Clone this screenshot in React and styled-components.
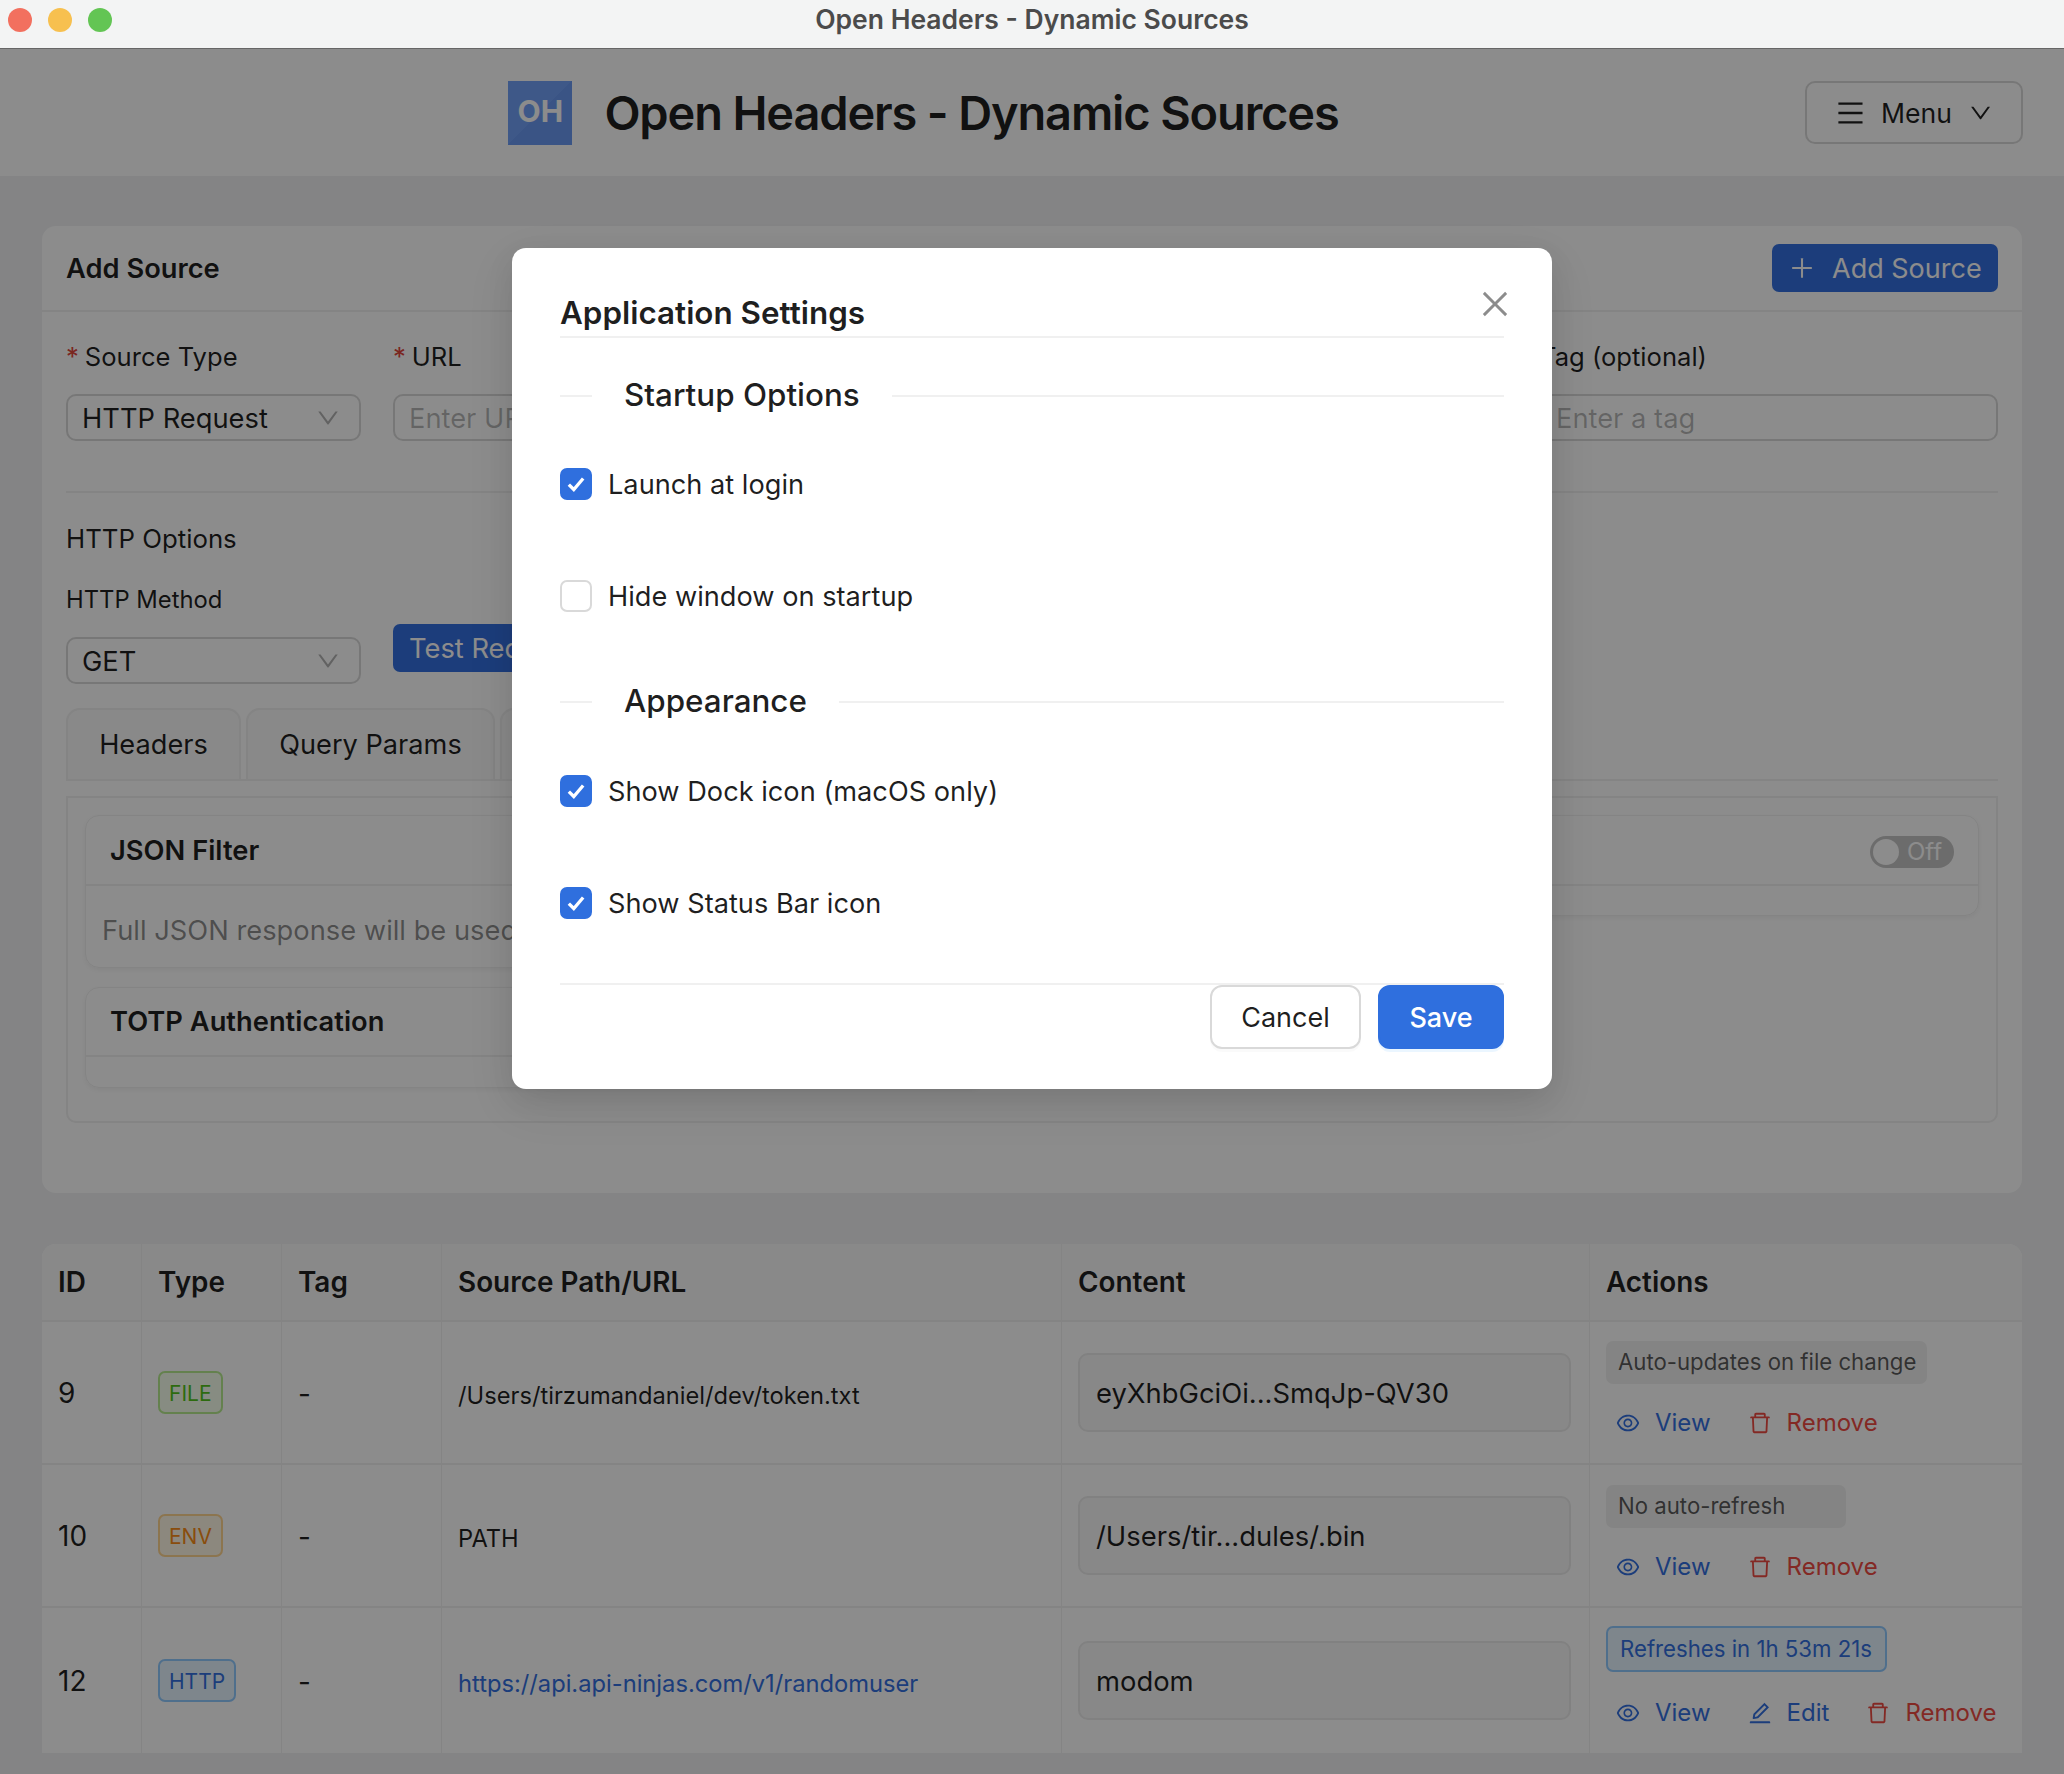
import React from 'react';
import styled, { createGlobalStyle } from 'styled-components';
import {
  AiOutlineClose,
  AiOutlineDelete,
  AiOutlineDown,
  AiOutlineEdit,
  AiOutlineEye,
  AiOutlineMenu,
  AiOutlinePlus,
} from 'react-icons/ai';

const GlobalStyle = createGlobalStyle`
  html, body {
    margin: 0;
    padding: 0;
    background: #f0f1f3;
  }

  * {
    box-sizing: border-box;
  }

  body {
    font-family: Inter, "Liberation Sans", sans-serif;
    color: rgba(0, 0, 0, 0.88);
  }
`;

const Screen = styled.div`
  position: relative;
  width: 2064px;
  height: 1774px;
  overflow: hidden;
`;

const TitleBar = styled.div`
  position: relative;
  display: flex;
  align-items: center;
  justify-content: center;
  height: 49px;
  padding-bottom: 11px;
  background: #f3f4f4;
  border-bottom: 1px solid #666;
  font-size: 26.5px;
  font-weight: 600;
  color: #4b4b4b;
`;

const Lights = styled.div`
  position: absolute;
  left: 8px;
  top: 8px;
  display: flex;
  gap: 16px;
`;

const Light = styled.span`
  width: 24px;
  height: 24px;
  border-radius: 50%;
  background: ${({ $color }) => $color};
`;

const AppHeader = styled.header`
  display: flex;
  align-items: center;
  height: 127px;
  padding: 0 41px 0 42px;
  background: #fff;
`;

const Brand = styled.div`
  flex: 1;
  display: flex;
  align-items: center;
  justify-content: center;
  gap: 32px;
`;

const Logo = styled.div`
  display: flex;
  align-items: center;
  justify-content: center;
  width: 64px;
  height: 64px;
  background: linear-gradient(135deg, #72a1f8 50%, #6a9af2 50%);
  color: #fff;
  font-size: 30px;
  font-weight: 700;
  padding-bottom: 4px;
`;

const AppTitle = styled.h1`
  margin: 0;
  font-size: 47px;
  line-height: 64px;
  font-weight: 600;
  letter-spacing: -1.16px;
`;

const MenuButton = styled.div`
  display: flex;
  align-items: center;
  width: 218px;
  height: 63px;
  padding: 0 28px;
  border: 2px solid #d9d9d9;
  border-radius: 10px;
  font-size: 26.6px;
  svg:first-child {
    font-size: 32px;
    margin-right: 15px;
  }
  svg:last-child {
    font-size: 26px;
    margin-left: 16px;
  }
`;

const Main = styled.main`
  padding: 50px 42px 0;
`;

const Card = styled.section`
  height: 967px;
  background: #fff;
  border-radius: 14px;
`;

const CardHeader = styled.div`
  display: flex;
  align-items: center;
  justify-content: space-between;
  height: 86px;
  padding: 0 24px;
  border-bottom: 2px solid #f0f0f0;
`;

const CardTitle = styled.div`
  font-size: 27.3px;
  font-weight: 600;
`;

const PrimaryButton = styled.div`
  display: inline-flex;
  align-items: center;
  gap: 16px;
  height: 48px;
  padding: 0 16px;
  border-radius: 7px;
  background: #3370e0;
  color: #fff;
  font-size: 27px;
  white-space: nowrap;
`;

const AddButton = styled(PrimaryButton)`
  width: 226px;
  svg {
    font-size: 28px;
    flex-shrink: 0;
  }
`;

const CardBody = styled.div`
  padding: 25px 24px 0;
`;

const FormGrid = styled.div`
  display: grid;
  grid-template-columns: 295px 1fr 458px;
  column-gap: 32px;
`;

const Label = styled.div`
  height: 40px;
  margin-bottom: 17px;
  font-size: 25.6px;
  line-height: 40px;
  white-space: nowrap;
`;

const Star = styled.span`
  color: #e0453a;
  margin-right: 6px;
`;

const Field = styled.div`
  display: flex;
  align-items: center;
  justify-content: space-between;
  height: 47px;
  padding: 1px 14px 0;
  border: 2px solid #d9d9d9;
  border-radius: 10px;
  font-size: 27.3px;
  color: ${({ $placeholder }) => ($placeholder ? 'rgba(0, 0, 0, 0.28)' : 'inherit')};
  svg {
    font-size: 26px;
    color: rgba(0, 0, 0, 0.3);
    margin-right: 4px;
  }
`;

const Rule = styled.hr`
  margin: 50px 0 26px;
  border: 0;
  border-top: 2px solid #f0f0f0;
`;

const SectionName = styled.div`
  font-size: 25.8px;
  line-height: 40px;
  height: 40px;
  margin-bottom: 21px;
`;

const MethodRow = styled.div`
  display: grid;
  grid-template-columns: 295px auto;
  column-gap: 32px;
  justify-content: start;
`;

const MethodLabel = styled(Label)`
  font-size: 23.8px;
`;

const TestButton = styled(PrimaryButton)`
  align-self: end;
  margin-bottom: 12px;
  font-size: 27.3px;
`;

const TabBar = styled.div`
  display: flex;
  gap: 5px;
  margin-top: 24px;
  height: 73px;
  border-bottom: 2px solid #f0f0f0;
`;

const Tab = styled.div`
  display: flex;
  align-items: center;
  justify-content: center;
  width: ${({ $width }) => $width}px;
  height: 71px;
  background: #fafafa;
  border: 2px solid #f0f0f0;
  border-bottom: 0;
  border-radius: 14px 14px 0 0;
  font-size: 27.2px;
`;

const TabPanel = styled.div`
  display: grid;
  grid-template-columns: 900px 1fr;
  align-items: start;
  height: 327px;
  margin-top: 15px;
  padding: 17px;
  border: 2px solid #f0f0f0;
  border-radius: 0 0 10px 10px;
`;

const PanelColumn = styled.div`
  display: flex;
  flex-direction: column;
  gap: 19px;
`;

const InnerCard = styled.div`
  height: ${({ $height }) => $height}px;
  border: 1px solid #f0f0f0;
  border-radius: 14px;
  box-shadow: 0 2px 4px rgba(0, 0, 0, 0.05);
`;

const InnerHeader = styled.div`
  display: flex;
  align-items: center;
  justify-content: ${({ $end }) => ($end ? 'flex-end' : 'space-between')};
  height: ${({ $height }) => $height}px;
  padding: 0 24px;
  border-bottom: 2px solid #f0f0f0;
  font-size: 27.3px;
  font-weight: 600;
`;

const InnerText = styled.div`
  padding: 0 16px;
  line-height: 90px;
  font-size: 27.3px;
  color: rgba(0, 0, 0, 0.45);
  white-space: nowrap;
`;

const SwitchOff = styled.div`
  display: flex;
  align-items: center;
  width: 84px;
  height: 32px;
  margin-top: 3px;
  padding: 0 3px;
  border-radius: 16px;
  background: rgba(0, 0, 0, 0.25);
  color: #fff;
  font-size: 24px;
  font-weight: 400;
  opacity: 0.9;
  &::before {
    content: '';
    width: 26px;
    height: 26px;
    margin-right: 8px;
    border-radius: 50%;
    background: #fff;
  }
`;

const SourceTable = styled.div`
  height: 509px;
  margin-top: 51px;
  overflow: hidden;
  background: #fff;
  border-radius: 14px 14px 0 0;
`;

const TableRow = styled.div`
  display: grid;
  grid-template-columns: 100px 140px 160px 620px 528px 432px;
  height: ${({ $height }) => $height}px;
  border-bottom: ${({ $last }) => ($last ? '0' : '2px solid #f0f0f0')};
`;

const Cell = styled.div`
  display: flex;
  flex-direction: column;
  align-items: flex-start;
  justify-content: center;
  padding: ${({ $shift }) => $shift || 0}px 16px 0;
  border-right: ${({ $end }) => ($end ? '0' : '1px solid #f0f0f0')};
  font-size: ${({ $size }) => $size || 28}px;
  min-width: 0;
`;

const HeadCell = styled(Cell)`
  font-size: 27.9px;
  font-weight: 600;
  background: #fafafa;
`;

const TypeTag = styled.span`
  padding: 0 9px;
  height: 43px;
  border: 2px solid ${({ $border }) => $border};
  border-radius: 7px;
  background: ${({ $bg }) => $bg};
  color: ${({ $color }) => $color};
  font-size: 21px;
  line-height: 41px;
`;

const SourceLink = styled.span`
  color: #3370e0;
`;

const ContentBox = styled.div`
  display: flex;
  align-items: center;
  width: 493px;
  height: 79px;
  padding: 0 16px;
  border: 2px solid #ebebeb;
  border-radius: 10px;
  background: #f7f7f7;
  font-size: 27.4px;
  white-space: nowrap;
`;

const ActionCell = styled(Cell)`
  justify-content: flex-start;
  padding-top: ${({ $top }) => $top}px;
`;

const StatusTag = styled.span`
  display: block;
  width: ${({ $width }) => $width}px;
  height: ${({ $active }) => ($active ? 46 : 43)}px;
  padding: 0 ${({ $active }) => ($active ? 12 : 10)}px;
  border: 2px solid ${({ $active }) => ($active ? '#91caff' : 'transparent')};
  border-radius: 7px;
  background: ${({ $active }) => ($active ? '#e6f4ff' : 'rgba(0, 0, 0, 0.06)')};
  color: ${({ $active }) => ($active ? '#3370e0' : 'rgba(0, 0, 0, 0.65)')};
  font-size: 22.2px;
  line-height: ${({ $active }) => ($active ? 42 : 38)}px;
  white-space: nowrap;
`;

const Actions = styled.div`
  display: flex;
  align-items: center;
  gap: 36px;
  margin-top: ${({ $top }) => $top}px;
  padding-left: 9px;
`;

const ActionLink = styled.span`
  display: inline-flex;
  align-items: center;
  gap: 14px;
  font-size: 24px;
  color: ${({ $danger }) => ($danger ? '#ef4b43' : '#3370e0')};
  svg {
    font-size: 26px;
  }
`;

const Overlay = styled.div`
  position: absolute;
  top: 49px;
  left: 0;
  right: 0;
  bottom: 0;
  display: flex;
  justify-content: center;
  padding-top: 199px;
  background: rgba(0, 0, 0, 0.45);
`;

const Modal = styled.div`
  position: relative;
  width: 1040px;
  height: 841px;
  padding: 48px 48px 40px;
  background: #fff;
  border-radius: 14px;
  box-shadow: 0 10px 28px rgba(0, 0, 0, 0.08), 0 16px 50px rgba(0, 0, 0, 0.08);
`;

const CloseIcon = styled(AiOutlineClose)`
  position: absolute;
  top: 38px;
  right: 39px;
  font-size: 36px;
  color: rgba(0, 0, 0, 0.45);
`;

const ModalTitle = styled.div`
  height: 42px;
  border-bottom: 2px solid #f0f0f0;
  font-size: 31.4px;
  font-weight: 600;
  line-height: 34px;
`;

const GroupDivider = styled.div`
  display: flex;
  align-items: center;
  gap: 32px;
  height: 40px;
  margin-top: ${({ $top }) => $top}px;
  margin-bottom: ${({ $bottom }) => $bottom}px;
  white-space: nowrap;
  &::before,
  &::after {
    content: '';
    height: 2px;
    background: #f0f0f0;
  }
  &::before {
    width: 32px;
  }
  &::after {
    flex: 1;
  }
`;

const GroupLabel = styled.span`
  padding-bottom: 2px;
  font-size: 31.4px;
  font-weight: 500;
`;

const CheckRow = styled.label`
  display: flex;
  align-items: center;
  gap: 16px;
  height: 42px;
  margin-bottom: ${({ $gap }) => $gap || 0}px;
  font-size: 27.2px;
`;

const CheckBox = styled.span`
  display: flex;
  align-items: center;
  justify-content: center;
  width: 32px;
  height: 32px;
  border-radius: 7px;
  border: 2px solid ${({ $checked }) => ($checked ? '#2f6fde' : '#d9d9d9')};
  background: ${({ $checked }) => ($checked ? '#2f6fde' : '#fff')};
`;

const ModalFooter = styled.div`
  display: flex;
  justify-content: flex-end;
  gap: 17px;
  margin-top: 59px;
  border-top: 2px solid #f0f0f0;
`;

const FooterButton = styled.div`
  display: flex;
  align-items: center;
  justify-content: center;
  width: ${({ $width }) => $width}px;
  height: 64px;
  border: 2px solid ${({ $primary }) => ($primary ? '#2f6fde' : '#d9d9d9')};
  border-radius: 12px;
  background: ${({ $primary }) => ($primary ? '#2f6fde' : '#fff')};
  color: ${({ $primary }) => ($primary ? '#fff' : 'inherit')};
  font-size: 27px;
  font-weight: ${({ $primary }) => ($primary ? 500 : 400)};
  box-shadow: 0 3px 0 ${({ $primary }) => ($primary ? 'rgba(5, 145, 255, 0.08)' : 'rgba(0, 0, 0, 0.02)')};
`;

const Check = ({ checked }) => (
  <CheckBox $checked={checked}>
    {checked && (
      <svg width="22" height="22" viewBox="0 0 20 20" fill="none">
        <path d="M3.5 10.5 8 15l8.5-10" stroke="#fff" strokeWidth="3" />
      </svg>
    )}
  </CheckBox>
);

const sources = [
  {
    id: 9,
    type: { label: 'FILE', color: '#52c41a', border: '#b7eb8f', bg: '#f6ffed' },
    path: '/Users/tirzumandaniel/dev/token.txt',
    content: 'eyXhbGciOi...SmqJp-QV30',
    status: 'Auto-updates on file change',
    statusWidth: 321,
    top: 19,
    actionsTop: 24,
    height: 143,
  },
  {
    id: 10,
    type: { label: 'ENV', color: '#fa8c16', border: '#ffd591', bg: '#fff7e6' },
    path: 'PATH',
    content: '/Users/tir...dules/.bin',
    status: 'No auto-refresh',
    statusWidth: 240,
    top: 20,
    actionsTop: 24,
    height: 143,
  },
  {
    id: 12,
    type: { label: 'HTTP', color: '#3370e0', border: '#91caff', bg: '#e6f4ff' },
    path: 'https://api.api-ninjas.com/v1/randomuser',
    link: true,
    content: 'modom',
    status: 'Refreshes in 1h 53m 21s',
    statusWidth: 281,
    active: true,
    editable: true,
    top: 18,
    actionsTop: 26,
    height: 145,
    last: true,
  },
];

const App = () => (
  <Screen>
    <GlobalStyle />
    <TitleBar>
      <Lights>
        <Light $color="#f2705f" />
        <Light $color="#f7c04f" />
        <Light $color="#63c554" />
      </Lights>
      Open Headers - Dynamic Sources
    </TitleBar>

    <AppHeader>
      <Brand>
        <Logo>OH</Logo>
        <AppTitle>Open Headers - Dynamic Sources</AppTitle>
      </Brand>
      <MenuButton>
        <AiOutlineMenu />
        Menu
        <AiOutlineDown />
      </MenuButton>
    </AppHeader>

    <Main>
      <Card>
        <CardHeader>
          <CardTitle>Add Source</CardTitle>
          <AddButton>
            <AiOutlinePlus />
            Add Source
          </AddButton>
        </CardHeader>
        <CardBody>
          <FormGrid>
            <div>
              <Label><Star>*</Star>Source Type</Label>
              <Field>HTTP Request <AiOutlineDown /></Field>
            </div>
            <div>
              <Label><Star>*</Star>URL</Label>
              <Field $placeholder>Enter URL</Field>
            </div>
            <div>
              <Label>Tag (optional)</Label>
              <Field $placeholder>Enter a tag</Field>
            </div>
          </FormGrid>
          <Rule />
          <SectionName>HTTP Options</SectionName>
          <MethodRow>
            <div>
              <MethodLabel>HTTP Method</MethodLabel>
              <Field>GET <AiOutlineDown /></Field>
            </div>
            <TestButton>Test Request</TestButton>
          </MethodRow>
          <TabBar>
            <Tab $width={175}>Headers</Tab>
            <Tab $width={249}>Query Params</Tab>
            <Tab $width={120}>Body</Tab>
          </TabBar>
          <TabPanel>
            <PanelColumn>
              <InnerCard $height={153}>
                <InnerHeader $height={70}>JSON Filter</InnerHeader>
                <InnerText>Full JSON response will be used</InnerText>
              </InnerCard>
              <InnerCard $height={101}>
                <InnerHeader $height={69}>TOTP Authentication</InnerHeader>
              </InnerCard>
            </PanelColumn>
            <InnerCard $height={101}>
              <InnerHeader $height={70} $end>
                <SwitchOff>Off</SwitchOff>
              </InnerHeader>
            </InnerCard>
          </TabPanel>
        </CardBody>
      </Card>

      <SourceTable>
        <TableRow $height={78}>
          <HeadCell>ID</HeadCell>
          <HeadCell>Type</HeadCell>
          <HeadCell>Tag</HeadCell>
          <HeadCell>Source Path/URL</HeadCell>
          <HeadCell>Content</HeadCell>
          <HeadCell $end>Actions</HeadCell>
        </TableRow>
        {sources.map((source) => (
          <TableRow key={source.id} $height={source.height} $last={source.last}>
            <Cell>{source.id}</Cell>
            <Cell>
              <TypeTag $color={source.type.color} $border={source.type.border} $bg={source.type.bg}>
                {source.type.label}
              </TypeTag>
            </Cell>
            <Cell $shift={2}>-</Cell>
            <Cell $size={23.7} $shift={6}>
              {source.link ? <SourceLink>{source.path}</SourceLink> : source.path}
            </Cell>
            <Cell>
              <ContentBox>{source.content}</ContentBox>
            </Cell>
            <ActionCell $end $top={source.top}>
              <StatusTag $width={source.statusWidth} $active={source.active}>{source.status}</StatusTag>
              <Actions $top={source.actionsTop}>
                <ActionLink><AiOutlineEye />View</ActionLink>
                {source.editable && <ActionLink><AiOutlineEdit />Edit</ActionLink>}
                <ActionLink $danger><AiOutlineDelete />Remove</ActionLink>
              </Actions>
            </ActionCell>
          </TableRow>
        ))}
      </SourceTable>
    </Main>

    <Overlay>
      <Modal>
        <CloseIcon />
        <ModalTitle>Application Settings</ModalTitle>
        <GroupDivider $top={38} $bottom={47}><GroupLabel>Startup Options</GroupLabel></GroupDivider>
        <CheckRow $gap={70}><Check checked />Launch at login</CheckRow>
        <CheckRow><Check />Hide window on startup</CheckRow>
        <GroupDivider $top={65} $bottom={48}><GroupLabel>Appearance</GroupLabel></GroupDivider>
        <CheckRow $gap={70}><Check checked />Show Dock icon (macOS only)</CheckRow>
        <CheckRow><Check checked />Show Status Bar icon</CheckRow>
        <ModalFooter>
          <FooterButton $width={151}>Cancel</FooterButton>
          <FooterButton $width={126} $primary>Save</FooterButton>
        </ModalFooter>
      </Modal>
    </Overlay>
  </Screen>
);

export default App;
